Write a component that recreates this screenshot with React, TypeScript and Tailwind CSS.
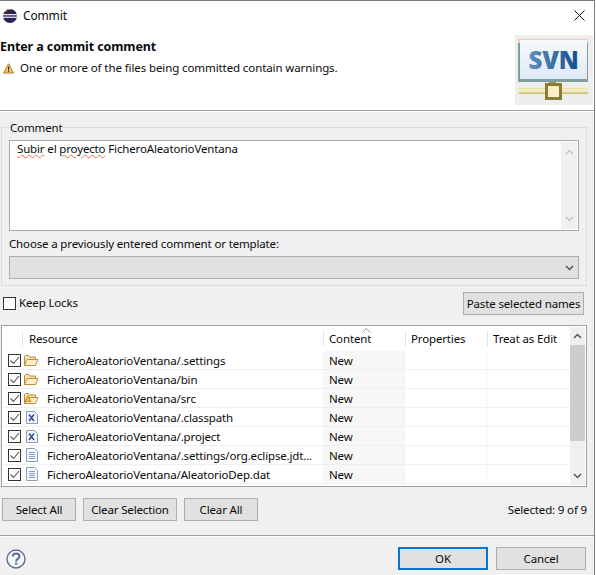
const rows = [
  { name: "FicheroAleatorioVentana/.settings", icon: "folder" },
  { name: "FicheroAleatorioVentana/bin", icon: "folder" },
  { name: "FicheroAleatorioVentana/src", icon: "srcFolder" },
  { name: "FicheroAleatorioVentana/.classpath", icon: "xml" },
  { name: "FicheroAleatorioVentana/.project", icon: "xml" },
  { name: "FicheroAleatorioVentana/.settings/org.eclipse.jdt...", icon: "file" },
  { name: "FicheroAleatorioVentana/AleatorioDep.dat", icon: "file" },
];

function EclipseIcon() {
  return (
    <svg width="16" height="16" viewBox="0 0 16 16">
      <circle cx="8" cy="8" r="7" fill="#2c2255" />
      <path d="M3 4a6 6 0 0 1 6-2.6" stroke="#e8862a" strokeWidth="1" fill="none" />
      <rect x="1" y="6" width="14" height="1.3" fill="#e8e4ef" />
      <rect x="1" y="8.6" width="14" height="1.3" fill="#e8e4ef" />
    </svg>
  );
}

function WarningIcon() {
  return (
    <svg width="11" height="11" viewBox="0 0 11 11">
      <path d="M5.5 .8 10.5 10H.5z" fill="#f3c35f" stroke="#a9803a" strokeWidth="1" strokeLinejoin="round" />
      <rect x="5" y="3.6" width="1.1" height="3.6" fill="#3b2c10" />
      <rect x="5" y="7.9" width="1.1" height="1.1" fill="#3b2c10" />
    </svg>
  );
}

function SvnLogo() {
  return (
    <svg width="78" height="70" viewBox="0 0 78 70" className="block">
      <defs>
        <linearGradient id="screen" x1="0" y1="0" x2="0" y2="1">
          <stop offset="0" stopColor="#f7fafd" />
          <stop offset="1" stopColor="#dfe8f3" />
        </linearGradient>
        <linearGradient id="letters" x1="0" y1="0" x2="1" y2="0">
          <stop offset="0" stopColor="#5e8fc0" />
          <stop offset="1" stopColor="#164f8e" />
        </linearGradient>
        <linearGradient id="pipe" x1="0" y1="0" x2="0" y2="1">
          <stop offset="0" stopColor="#e9e2a0" />
          <stop offset="0.5" stopColor="#f6f2cf" />
          <stop offset="1" stopColor="#c3b464" />
        </linearGradient>
      </defs>
      <rect width="78" height="70" fill="#eeeeee" />
      <rect x="3" y="4" width="70" height="43" fill="#e9d2b4" />
      <rect x="3" y="8" width="70" height="39" fill="#7f9ea0" />
      <rect x="5" y="5" width="67" height="39" fill="url(#screen)" />
      <text x="38.5" y="34" textAnchor="middle" fontFamily="'Open Sans', sans-serif" fontWeight="800" fontSize="24" fill="url(#letters)">SVN</text>
      <rect x="34" y="47" width="7" height="3" fill="#9c9a58" />
      <rect x="4" y="53" width="69" height="6" fill="url(#pipe)" />
      <rect x="30" y="48" width="17" height="17" fill="#8d7c35" />
      <rect x="33" y="51" width="11" height="11" fill="#f8efc6" />
    </svg>
  );
}

function FolderIcon({ warn }: { warn?: boolean }) {
  return (
    <svg width="15" height="13" viewBox="0 0 15 13">
      <path d="M.5 11.5V2.5l1-1h3l1 1.5h6v2" fill="#fbe3ae" stroke="#b98a3e" />
      <path d="M.5 11.5 3 5.5h11l-2.5 6z" fill="#fdeec9" stroke="#c08f3e" strokeLinejoin="round" />
      {warn && <path d="M4 3.5 7 9.5H1z" fill="#f2b84e" stroke="#b8812c" strokeWidth=".8" />}
    </svg>
  );
}

function XmlIcon() {
  return (
    <svg width="12" height="13" viewBox="0 0 12 13">
      <path d="M.5.5h8l3 3v9H.5z" fill="#f4f6fb" stroke="#8d99b3" />
      <path d="m3 3.5 5 6.5M8 3.5l-5 6.5" stroke="#2d4e9a" strokeWidth="1.5" fill="none" />
    </svg>
  );
}

function FileIcon() {
  return (
    <svg width="12" height="14" viewBox="0 0 12 14">
      <path d="M.5.5h8l3 3v10H.5z" fill="#f7f9fd" stroke="#8d9cb8" />
      <path d="M3 4.5h6M3 6.5h6M3 8.5h6M3 10.5h6" stroke="#7f9bd0" fill="none" />
    </svg>
  );
}

function RowIcon({ kind }: { kind: string }) {
  if (kind === "folder") return <FolderIcon />;
  if (kind === "srcFolder") return <FolderIcon warn />;
  if (kind === "xml") return <XmlIcon />;
  return <FileIcon />;
}

function Check() {
  return (
    <span className="flex h-[13px] w-[13px] items-center justify-center border border-[#333333] bg-white">
      <svg width="11" height="11" viewBox="0 0 11 11">
        <path d="m1.5 5.5 3 3 5.5-6.5" stroke="#555555" strokeWidth="1.1" fill="none" />
      </svg>
    </span>
  );
}

function Button({ label, className }: { label: string; className: string }) {
  return (
    <button className={`h-[23px] whitespace-nowrap border border-[#adadad] bg-[#e1e1e1] text-center leading-[20px] ${className}`}>
      {label}
    </button>
  );
}

function Chevron({ up, color }: { up?: boolean; color: string }) {
  return (
    <svg width="9" height="6" viewBox="0 0 9 6">
      <path d={up ? "M1 5l3.5-3.5L8 5" : "M1 1l3.5 3.5L8 1"} stroke={color} strokeWidth="1.5" fill="none" />
    </svg>
  );
}

export default function App() {
  return (
    <div className="h-[575px] w-[596px] overflow-hidden bg-white font-['Noto_Sans','Open_Sans',sans-serif] text-[11.5px] leading-[16px] tracking-[-0.15px] text-[#0a0a0a]">
      <div className="h-[575px] w-[595px] border-r border-t border-r-[#808080] border-t-[#777777] bg-[#f0f0f0]">
        {/* barra de titulo + cabecera */}
        <div className="h-[110px] border-b border-[#a0a0a0] bg-white">
          <div className="flex h-[29px] items-center pl-[2px] pr-[9px]">
            <EclipseIcon />
            <span className="ml-[5px] text-[12px]">Commit</span>
            <svg width="11" height="11" viewBox="0 0 11 11" className="ml-auto">
              <path d="M.5.5l10 10M10.5.5l-10 10" stroke="#111111" fill="none" />
            </svg>
          </div>
          <div className="flex">
            <div className="flex-1">
              <div className="mt-[9px] text-[12.5px] font-bold tracking-[-0.1px]">Enter a commit comment</div>
              <div className="mt-[5px] flex items-center pl-[3px]">
                <WarningIcon />
                <span className="ml-[6px] tracking-[-0.1px]">One or more of the files being committed contain warnings.</span>
              </div>
            </div>
            <div className="mr-px mt-[5px]">
              <SvnLogo />
            </div>
          </div>
        </div>
        <div className="h-px bg-white" />

        {/* grupo de comentario */}
        <div className="relative ml-px mt-[15px] h-[159px] w-[586px] border border-[#dcdcdc] px-[7px] pt-[12px]">
          <span className="absolute left-[7px] top-[-8px] bg-[#f0f0f0] px-px">Comment</span>
          <div className="flex h-[91px] w-[570px] border border-[#a9a9a9] bg-white">
            <div className="flex-1 pl-[7px]">
              <span className="underline decoration-[#e2704f] decoration-wavy decoration-1">Subir</span> el{" "}
              <span className="underline decoration-[#e2704f] decoration-wavy decoration-1">proyecto</span> FicheroAleatorioVentana
            </div>
            <div className="my-px mr-px flex w-[16px] flex-col items-center justify-between bg-[#f0f0f0] py-[7px]">
              <Chevron up color="#c4c4c4" />
              <Chevron color="#c4c4c4" />
            </div>
          </div>
          <div className="mt-[5px]">Choose a previously entered comment or template:</div>
          <div className="mt-[4px] flex h-[23px] w-[570px] items-center justify-end border border-[#adadad] bg-[#e0e0e0] pr-[4px]">
            <Chevron color="#555555" />
          </div>
        </div>

        {/* keep locks */}
        <div className="ml-[3px] mt-[6px] flex h-[23px] w-[581px] items-center">
          <span className="h-[13px] w-[13px] border border-[#333333] bg-white" />
          <span className="ml-[3px] pb-[2px]">Keep Locks</span>
          <Button label="Paste selected names" className="ml-auto w-[121px]" />
        </div>

        {/* tabla */}
        <div className="ml-px mt-[10px] h-[162px] w-[586px] border border-[#a0a0a0] bg-white p-px">
          <div className="flex h-full">
            <div className="w-[568px]">
              <div className="flex h-[24px] items-end pb-[4px]">
                <div className="w-[19px]" />
                <div className="w-[301px] border-l border-[#e5e5e5] pl-[6px]">Resource</div>
                <div className="relative w-[82px] border-l border-[#e5e5e5] pl-[5px]">
                  Content
                  <svg width="9" height="5" viewBox="0 0 9 5" className="absolute left-[38px] top-[-3px]">
                    <path d="M.5 4.5l4-4 4 4" stroke="#9a9a9a" fill="none" />
                  </svg>
                </div>
                <div className="w-[82px] border-l border-[#e5e5e5] pl-[5px]">Properties</div>
                <div className="flex-1 border-l border-[#e5e5e5] pl-[5px]">Treat as Edit</div>
              </div>
              {rows.map((row) => (
                <div key={row.name} className="flex h-[19px] items-center border-b border-[#efefef]">
                  <div className="flex w-[44px] items-center pl-[5px]">
                    <Check />
                    <span className="flex w-[21px] items-center justify-center">
                      <RowIcon kind={row.icon} />
                    </span>
                  </div>
                  <div className="w-[276px] truncate pr-[2px] pt-[1px]">{row.name}</div>
                  <div className="flex h-full w-[82px] items-center border-r border-[#eef1f8] bg-[#f7f7f7] pl-[6px] pt-[1px]">New</div>
                  <div className="h-full w-[82px] border-r border-[#eef1f8]" />
                  <div className="h-full flex-1" />
                </div>
              ))}
            </div>
            <div className="ml-px flex w-[15px] flex-col items-center bg-[#f0f0f0]">
              <div className="flex h-[18px] items-center">
                <Chevron up color="#555555" />
              </div>
              <div className="h-[96px] w-full bg-[#cdcdcd]" />
              <div className="mt-auto flex h-[18px] items-center">
                <Chevron color="#555555" />
              </div>
            </div>
          </div>
        </div>

        {/* botones de seleccion */}
        <div className="ml-[2px] mt-[11px] flex h-[23px] w-[585px] items-center gap-[7px]">
          <Button label="Select All" className="w-[74px]" />
          <Button label="Clear Selection" className="w-[94px]" />
          <Button label="Clear All" className="w-[74px]" />
          <span className="ml-auto">Selected: 9 of 9</span>
        </div>

        <div className="mt-[14px] h-px bg-[#a0a0a0]" />
        <div className="h-px bg-white" />

        {/* pie */}
        <div className="mt-[10px] flex h-[23px] items-center pl-[6px]">
          <svg width="20" height="20" viewBox="0 0 20 20">
            <circle cx="10" cy="10" r="9" fill="#f5f6f9" stroke="#5b7096" strokeWidth="1.4" />
            <path d="M6.8 7.4c0-4 6.6-4 6.6 0 0 2.6-3.3 2.4-3.3 5" stroke="#5b7096" strokeWidth="2" fill="none" />
            <rect x="9" y="13.6" width="2.2" height="2.2" fill="#5b7096" />
          </svg>
          <button className="ml-[372px] h-[23px] w-[90px] border-2 border-[#0078d7] bg-[#e1e1e1] text-center">OK</button>
          <Button label="Cancel" className="ml-[8px] w-[90px]" />
        </div>
      </div>
    </div>
  );
}
